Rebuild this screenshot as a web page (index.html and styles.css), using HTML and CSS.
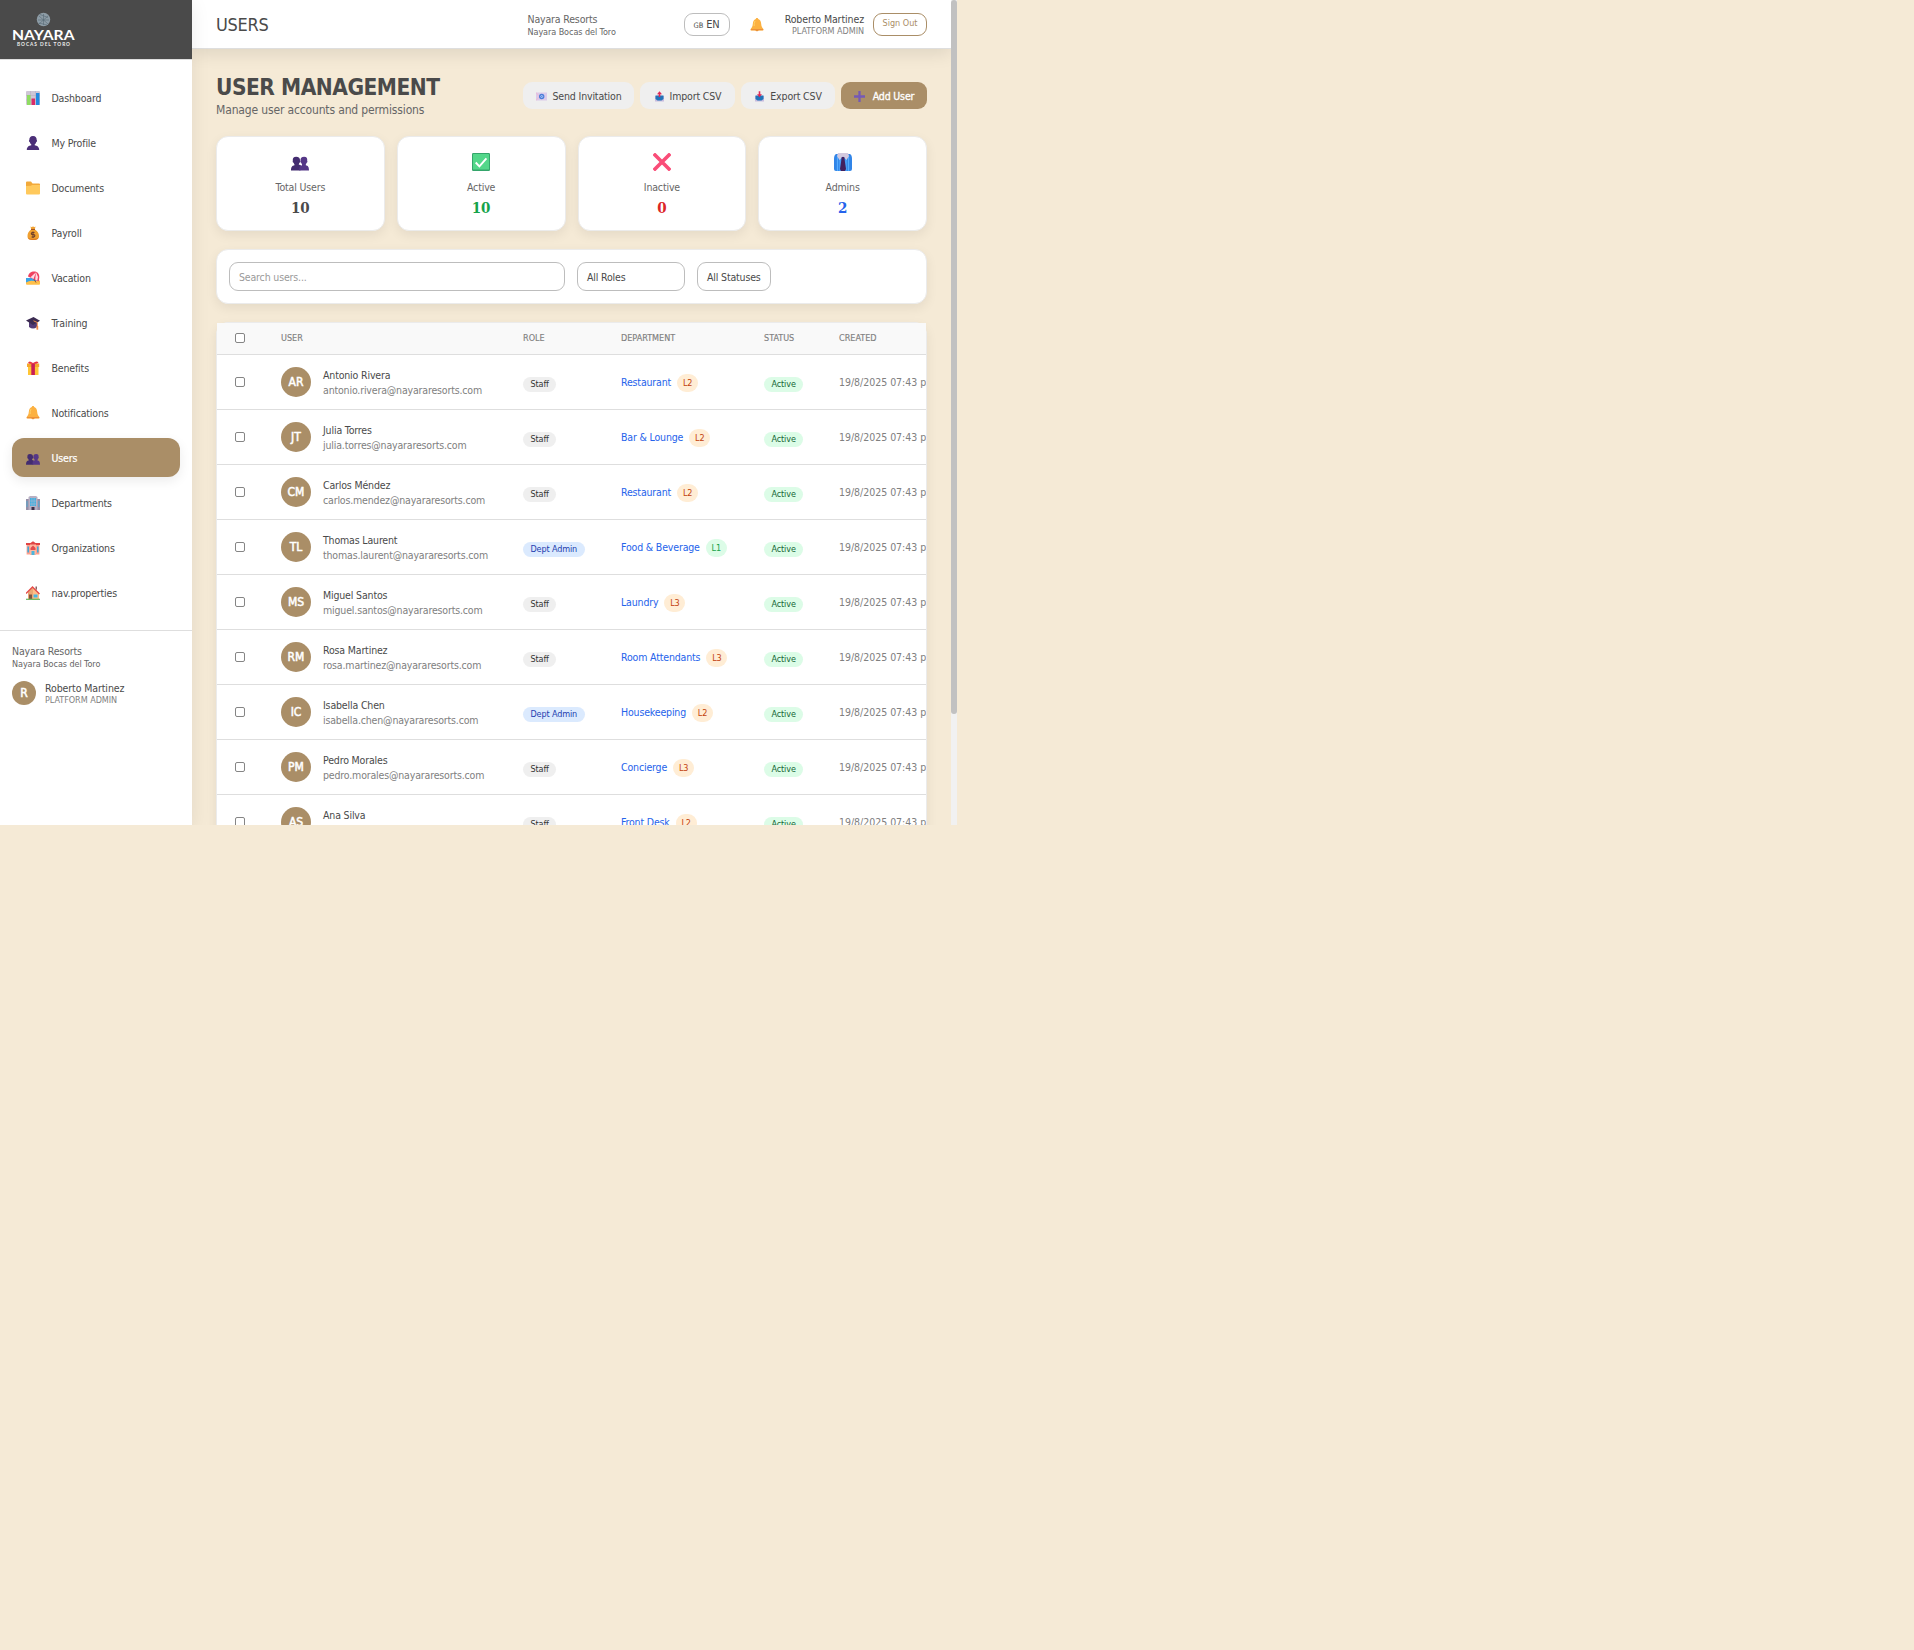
FILE: index.html
```html
<!DOCTYPE html>
<html lang="en">
<head>
<meta charset="utf-8">
<title>Users</title>
<link rel="stylesheet" href="styles.css">
</head>
<body>
<svg class="defs" aria-hidden="true">
  <symbol id="chart" viewBox="0 0 14 14"><rect width="14" height="14" rx="1" fill="#cfc6d6"/><path d="M0 4.500h14M0 9h14M4.500 0v14M9.500 0v14" stroke="#b5abc0" stroke-width=".5"/><rect x="1" y="4" width="3.500" height="10" fill="#8fdc62"/><rect x="5.500" y="7.500" width="3.500" height="6.500" fill="#d92b68"/><rect x="10" y="2" width="3.500" height="12" fill="#2389e0"/></symbol>
  <symbol id="person" viewBox="0 0 14 14"><path d="M7 0C4.300 0 3.200 1.800 3.300 4c-.6.200-.4 1.900.4 2.100.3 1.100.9 1.800 1.600 2.300v.8C3 9.800.8 10.500.8 14h12.400c0-3.500-2.200-4.200-4.500-4.800v-.8c.7-.5 1.300-1.200 1.600-2.300.8-.2 1-1.900.4-2.100C10.800 1.800 9.700 0 7 0z" fill="#4b2f78"/></symbol>
  <symbol id="folder" viewBox="0 0 14 14"><path d="M0 1.500q0-1 1-1h4l1.500 2H13q1 0 1 1v8H0z" fill="#f2a93a"/><path d="M0 5l5-.2 1-.8h8v8.500q0 1-1 1H1q-1 0-1-1z" fill="#ffc95c"/></symbol>
  <symbol id="money" viewBox="0 0 14 14"><path d="M4.500.5l1.500.7L7 .3l1.200.9 1.300-.7L8.800 3.500c2.600 1.300 4.200 4 4.200 6.500 0 3-2 4-6 4s-5.500-1-5.500-4c0-2.500 1.400-5.200 3.700-6.500z" fill="#f0a030"/><path d="M2 11.500c1 1.800 9 1.800 10.500 0C12 13.500 10 14 7 14s-4.500-.7-5-2.500z" fill="#d97a25"/><path d="M5 3.500h4" stroke="#a65622"/><path d="M8.500 6.500H6.300c-1.300 0-1.300 2 0 2h1.400c1.500 0 1.500 2.500 0 2.500H5.500M7 5.500V12" fill="none" stroke="#70402b" stroke-width="1.100"/></symbol>
  <symbol id="beach" viewBox="0 0 14 14"><path d="M0 7h13v5H0z" fill="#3aa4e8"/><path d="M0 11.500q4-2.500 8-1.500l6-.5V13q0 .7-1 .7H1Q0 13.700 0 13z" fill="#ffc04a"/><path d="M6 5l4 6.500" stroke="#81533e"/><path d="M2 5.500C2.500 1.500 7-.5 10.500 1 13.500 2.500 14 6 12.500 10.500z" fill="#ef4260"/><path d="M4.500 6.300L10 1.200 7.500 8zM10 1.200L12 6l-.8 3.800-2-1.200z" fill="#ffd9e3"/></symbol>
  <symbol id="cap" viewBox="0 0 14 14"><path d="M3 6v5q4 3 8 0V6z" fill="#533b76"/><path d="M0 4.500L7.500 1 14 4.700 7 9z" fill="#3c2b52"/><path d="M7.500 4.800l3.800 1.700v6" stroke="#ef8a45" fill="none" stroke-width="1"/><path d="M10.500 10h1.700v3.700h-1.700z" fill="#ef8a45"/></symbol>
  <symbol id="gift" viewBox="0 0 14 14"><path d="M2 5h10.500v9H2z" fill="#ffc635"/><path d="M1 2.500h12.200V6H1z" fill="#f5a82d"/><path d="M5.300 2.500h3.600V14H5.300z" fill="#c91e56"/><path d="M7 3Q3 3 2 2q1-3 5 0 4-3 5.500-.3Q11 3 7 3z" fill="#e83540"/></symbol>
  <symbol id="bell" viewBox="0 0 14 14"><path d="M5.300 12a1.800 1.800 0 0 0 3.400 0z" fill="#d9742c"/><path d="M7 0c-.8 0-1.200.5-1.200 1.100C3.800 1.600 3 3.500 2.800 6 2.600 8.800 1.700 9.500.7 11q-.5 1.500.8 1.500h11q1.300 0 .8-1.500c-1-1.500-1.900-2.200-2.100-5-.2-2.500-1-4.400-3-4.900C8.200.5 7.800 0 7 0z" fill="#fcb141"/><path d="M5 3q-1.200 3-.8 5" stroke="#ffd067" stroke-width="1" fill="none"/><path d="M.8 11h12.400v1.200H.8z" fill="#ed913a"/></symbol>
  <symbol id="people" viewBox="0 0 14 14"><path d="M4 3c-2 0-2.800 1.300-2.600 3-.3 1 .2 1.500.6 1.600l.7 1.300v.7C1 9.900 0 10.800 0 13.700h7.300L7.700 9.500 6 8.900l.6-1.300c.5-.2.800-1 .4-1.600.2-1.700-1-3-3-3z" fill="#432c70"/><path d="M10.200 3c-2 0-3 1.300-2.800 3-.3.800 0 1.500.5 1.600l.7 1.300v.7C7 9.900 6.500 10.800 6.500 13.700H14c0-2.900-.8-3.800-2.500-4.100v-.7l.7-1.300c.5-.2.800-1 .4-1.600.2-1.700-.4-3-2.400-3z" fill="#553787"/></symbol>
  <symbol id="office" viewBox="0 0 14 14"><path d="M0 3h3v11H0zM11 3h3v11h-3z" fill="#978fa7"/><path d="M2.500 1L4 0h6l1.500 1v13h-9z" fill="#b8b0c3"/><path d="M4 2h6v8H4z" fill="#40b1e2"/><path d="M5.900 2v9M8.100 2v9M3 5h8M3 8h8" stroke="#bcb6c6" stroke-width=".5"/><path d="M1 5v6M12.800 5v6" stroke="#54a9d0"/><path d="M5.500 11h3v3h-3z" fill="#3d3048"/></symbol>
  <symbol id="hotel" viewBox="0 0 14 14"><path d="M.6 4h12.800v9.500H.6z" fill="#ffa08c"/><path d="M0 2h4.500L7 .2 9.500 2H14v2H0z" fill="#e04545"/><path d="M4 3.500h6V14H4z" fill="#ffb8a0"/><path d="M2.200 5.500v6M11.800 5.500v6" stroke="#42a9d8" stroke-width="1.600"/><path d="M4.500 7L7 4.500 9.500 7v2h-5z" fill="#e14b4d"/><path d="M5.500 10h3v4h-3z" fill="#4ab6dd"/></symbol>
  <symbol id="house" viewBox="0 0 14 14"><path d="M2 6l4.500-5L12 7v6.500H2z" fill="#eba774"/><path d="M6.500 1L13 7v6H7V5z" fill="#ffbd87"/><path d="M9.500.5H11V4L9.500 3z" fill="#8b6564"/><path d="M0 7.500L6.500 1l7 7" fill="none" stroke="#e44b4a" stroke-width="1.400"/><path d="M3 8.500h3V13H3z" fill="#80533f"/><path d="M7.500 8.500h4v3h-4z" fill="#42b8e4"/><path d="M0 13.300h14" stroke="#66b65a" stroke-width="1.200"/></symbol>
  <symbol id="check" viewBox="0 0 18 18"><rect width="18" height="18" rx="1.200" fill="#34a56b"/><rect x="1" y="1" width="16" height="15.500" rx=".5" fill="#53d78a"/><path d="M3.700 9.500l3.700 3.800 7-8" stroke="#fff" stroke-width="1.900" fill="none"/></symbol>
  <symbol id="cross" viewBox="0 0 18 18"><path d="M2 2l14 14M16 2L2 16" stroke="#fa4d78" stroke-width="3.600" stroke-linecap="square"/></symbol>
  <symbol id="tie" viewBox="0 0 18 18"><path d="M2 1h14q2 1 2 5v10q0 2-2 2H2q-2 0-2-2V6Q0 2 2 1z" fill="#3185e8"/><path d="M3.500 3v15M6 5v13M12 5v13M14.500 3v15" stroke="#55adff" stroke-width="1.200"/><path d="M4 0h10l1 3-2.500 4L9 3.500 5.500 7 3 3z" fill="#d3c9df"/><path d="M7.700 4h2.600l.2 2 1.500 10-1 2H7l-1-2L7.500 6z" fill="#42205f"/></symbol>
  <symbol id="mail" viewBox="0 0 11 11"><rect y="1.500" width="11" height="8" fill="#dccbea"/><path d="M0 1.500L3 5.500 0 9.500" fill="none" stroke="#f2b6cf" stroke-width=".8"/><circle cx="5.700" cy="5.500" r="2.700" fill="#4a7dd8"/><circle cx="5.700" cy="5.500" r="1" fill="none" stroke="#cfe0ff" stroke-width=".7"/></symbol>
  <symbol id="tray-up" viewBox="0 0 11 11"><path d="M1 5h9v5.500H1z" fill="#c9bddf"/><path d="M1.500 4.500h8V8L7.500 9.500h-4L1.500 8z" fill="#2274b9"/><path d="M5.500.3L8 3.300H6.300V6H4.700V3.300H3z" fill="#df2856"/></symbol>
  <symbol id="tray-down" viewBox="0 0 11 11"><path d="M1 5h9v5.500H1z" fill="#c9bddf"/><path d="M1.500 4.500h8V8L7.500 9.500h-4L1.500 8z" fill="#2274b9"/><path d="M4.700.3h1.600v3H8L5.500 6.300 3 3.300h1.700z" fill="#df2856"/></symbol>
  <symbol id="plus" viewBox="0 0 11 11"><path d="M5.500 0v11M0 5.500h11" stroke="#7559b5" stroke-width="2.300"/></symbol>
</svg>

<div class="app">
  <aside class="sidebar">
    <div class="brand">
      <svg width="64" height="36" viewBox="0 0 64 36">
        <circle cx="31.500" cy="7.500" r="6.700" fill="#8d9ca6"/>
        <path d="M27 4l9 8M36 4l-9 8M26 8h11M31.500 2v11M28 2.500l8 3M27 11l8 2" stroke="#566873" stroke-width=".6"/>
        <text class="logo-name" x="0" y="27.500" textLength="62.500" lengthAdjust="spacingAndGlyphs">NAYARA</text>
        <text class="logo-place" x="5" y="34" textLength="53">BOCAS DEL TORO</text>
      </svg>
    </div>
    <nav class="nav">
      <a class="nav-item"><svg><use href="#chart"/></svg>Dashboard</a>
      <a class="nav-item"><svg><use href="#person"/></svg>My Profile</a>
      <a class="nav-item"><svg><use href="#folder"/></svg>Documents</a>
      <a class="nav-item"><svg><use href="#money"/></svg>Payroll</a>
      <a class="nav-item"><svg><use href="#beach"/></svg>Vacation</a>
      <a class="nav-item"><svg><use href="#cap"/></svg>Training</a>
      <a class="nav-item"><svg><use href="#gift"/></svg>Benefits</a>
      <a class="nav-item"><svg><use href="#bell"/></svg>Notifications</a>
      <a class="nav-item active"><svg><use href="#people"/></svg>Users</a>
      <a class="nav-item"><svg><use href="#office"/></svg>Departments</a>
      <a class="nav-item"><svg><use href="#hotel"/></svg>Organizations</a>
      <a class="nav-item"><svg><use href="#house"/></svg>nav.properties</a>
    </nav>
    <div class="account">
      <div class="org">Nayara Resorts</div>
      <div class="property">Nayara Bocas del Toro</div>
      <div class="me">
        <span class="me-avatar">R</span>
        <div><div class="me-name">Roberto Martinez</div><div class="me-role">PLATFORM ADMIN</div></div>
      </div>
    </div>
  </aside>

  <div class="content">
    <header class="topbar">
      <div class="page-name">USERS</div>
      <div class="top-org"><div class="org">Nayara Resorts</div><div class="property">Nayara Bocas del Toro</div></div>
      <div class="top-actions">
        <button class="lang"><small>GB</small> EN</button>
        <svg class="top-bell"><use href="#bell"/></svg>
        <div class="top-user"><div class="me-name">Roberto Martinez</div><div class="me-role">PLATFORM ADMIN</div></div>
        <button class="signout">Sign Out</button>
      </div>
    </header>

    <main class="main">
      <div class="heading">
        <div><h1>USER MANAGEMENT</h1><p>Manage user accounts and permissions</p></div>
        <div class="buttons">
          <button class="btn send"><svg><use href="#mail"/></svg>Send Invitation</button>
          <button class="btn import"><svg><use href="#tray-up"/></svg>Import CSV</button>
          <button class="btn export"><svg><use href="#tray-down"/></svg>Export CSV</button>
          <button class="btn primary"><svg><use href="#plus"/></svg>Add User</button>
        </div>
      </div>

      <div class="stats">
        <div class="card stat"><svg><use href="#people"/></svg><span>Total Users</span><b>10</b></div>
        <div class="card stat"><svg><use href="#check"/></svg><span>Active</span><b class="green">10</b></div>
        <div class="card stat"><svg><use href="#cross"/></svg><span>Inactive</span><b class="red">0</b></div>
        <div class="card stat"><svg><use href="#tie"/></svg><span>Admins</span><b class="blue">2</b></div>
      </div>

      <div class="card filters">
        <input class="field search" placeholder="Search users...">
        <div class="field roles">All Roles</div>
        <div class="field statuses">All Statuses</div>
      </div>

      <div class="card table-card"><div class="table-clip">
        <table>
          <colgroup><col class="c-check"><col class="c-user"><col class="c-role"><col class="c-dept"><col class="c-status"><col class="c-created"></colgroup>
          <thead><tr><th><i class="box"></i></th><th>USER</th><th>ROLE</th><th>DEPARTMENT</th><th>STATUS</th><th>CREATED</th></tr></thead>
          <tbody>
            <tr><td><i class="box"></i></td><td><div class="user"><span class="avatar">AR</span><div class="who"><div class="name">Antonio Rivera</div><div class="email">antonio.rivera@nayararesorts.com</div></div></div></td><td><span class="pill">Staff</span></td><td><div class="dept">Restaurant<span class="level">L2</span></div></td><td><span class="pill on">Active</span></td><td class="date">19/8/2025 07:43 p. m.</td></tr>
            <tr><td><i class="box"></i></td><td><div class="user"><span class="avatar">JT</span><div class="who"><div class="name">Julia Torres</div><div class="email">julia.torres@nayararesorts.com</div></div></div></td><td><span class="pill">Staff</span></td><td><div class="dept">Bar &amp; Lounge<span class="level">L2</span></div></td><td><span class="pill on">Active</span></td><td class="date">19/8/2025 07:43 p. m.</td></tr>
            <tr><td><i class="box"></i></td><td><div class="user"><span class="avatar">CM</span><div class="who"><div class="name">Carlos Méndez</div><div class="email">carlos.mendez@nayararesorts.com</div></div></div></td><td><span class="pill">Staff</span></td><td><div class="dept">Restaurant<span class="level">L2</span></div></td><td><span class="pill on">Active</span></td><td class="date">19/8/2025 07:43 p. m.</td></tr>
            <tr><td><i class="box"></i></td><td><div class="user"><span class="avatar">TL</span><div class="who"><div class="name">Thomas Laurent</div><div class="email">thomas.laurent@nayararesorts.com</div></div></div></td><td><span class="pill admin">Dept Admin</span></td><td><div class="dept">Food &amp; Beverage<span class="level one">L1</span></div></td><td><span class="pill on">Active</span></td><td class="date">19/8/2025 07:43 p. m.</td></tr>
            <tr><td><i class="box"></i></td><td><div class="user"><span class="avatar">MS</span><div class="who"><div class="name">Miguel Santos</div><div class="email">miguel.santos@nayararesorts.com</div></div></div></td><td><span class="pill">Staff</span></td><td><div class="dept">Laundry<span class="level">L3</span></div></td><td><span class="pill on">Active</span></td><td class="date">19/8/2025 07:43 p. m.</td></tr>
            <tr><td><i class="box"></i></td><td><div class="user"><span class="avatar">RM</span><div class="who"><div class="name">Rosa Martinez</div><div class="email">rosa.martinez@nayararesorts.com</div></div></div></td><td><span class="pill">Staff</span></td><td><div class="dept">Room Attendants<span class="level">L3</span></div></td><td><span class="pill on">Active</span></td><td class="date">19/8/2025 07:43 p. m.</td></tr>
            <tr><td><i class="box"></i></td><td><div class="user"><span class="avatar">IC</span><div class="who"><div class="name">Isabella Chen</div><div class="email">isabella.chen@nayararesorts.com</div></div></div></td><td><span class="pill admin">Dept Admin</span></td><td><div class="dept">Housekeeping<span class="level">L2</span></div></td><td><span class="pill on">Active</span></td><td class="date">19/8/2025 07:43 p. m.</td></tr>
            <tr><td><i class="box"></i></td><td><div class="user"><span class="avatar">PM</span><div class="who"><div class="name">Pedro Morales</div><div class="email">pedro.morales@nayararesorts.com</div></div></div></td><td><span class="pill">Staff</span></td><td><div class="dept">Concierge<span class="level">L3</span></div></td><td><span class="pill on">Active</span></td><td class="date">19/8/2025 07:43 p. m.</td></tr>
            <tr><td><i class="box"></i></td><td><div class="user"><span class="avatar">AS</span><div class="who"><div class="name">Ana Silva</div><div class="email">ana.silva@nayararesorts.com</div></div></div></td><td><span class="pill">Staff</span></td><td><div class="dept">Front Desk<span class="level">L2</span></div></td><td><span class="pill on">Active</span></td><td class="date">19/8/2025 07:43 p. m.</td></tr>
          </tbody>
        </table>
      </div></div>
    </main>
  </div>
  <div class="scrollbar"><div class="thumb"></div></div>
</div>
</body>
</html>
```
FILE: styles.css
```css
* { box-sizing: border-box; }
body {
  margin: 0;
  background: #f5ead6;
  color: #4a4a4a;
  font-family: "DejaVu Sans Condensed", "DejaVu Sans", sans-serif;
  font-stretch: condensed;
  font-size: 10.5px;
  line-height: 15px;
  letter-spacing: -0.16px;
}
button, input { font: inherit; letter-spacing: inherit; color: inherit; }
button { padding: 0; white-space: nowrap; }
.defs { position: absolute; width: 0; height: 0; }
.app { display: flex; width: 957px; height: 825px; overflow: hidden; }

/* Sidebar */
.sidebar { width: 192px; flex: none; background: #fff; box-shadow: 0 4px 18px rgba(0, 0, 0, .08); z-index: 1; }
.brand { height: 60px; padding: 12px; background: #4a4a4a; border-bottom: 1px solid #dedede; }
.brand svg { display: block; }
.logo-name { font: bold 14px Lato, sans-serif; fill: #fff; letter-spacing: 0; }
.logo-place { font: bold 4.800px Lato, sans-serif; fill: #eee; letter-spacing: 0; }
.nav { display: flex; flex-direction: column; gap: 6px; padding: 18px 12px; }
.nav-item { display: flex; align-items: center; gap: 11.500px; height: 39px; padding: 2px 0 0 14px; border-radius: 12px; }
.nav-item svg { width: 14px; height: 14px; margin-top: -2px; }
.nav-item.active { background: #aa8e67; color: #fff; box-shadow: 0 4px 12px rgba(0, 0, 0, .08); -webkit-text-stroke: .2px #fff; }
.account { border-top: 1px solid #dedede; padding: 13px 12px; }
.org { line-height: 15px; }
.property { font-size: 9px; line-height: 11px; letter-spacing: -.07px; }
.account, .top-org { color: #666; }
.me { display: flex; align-items: center; gap: 9px; margin-top: 10px; }
.me-avatar { display: grid; place-items: center; width: 24px; height: 24px; padding-top: 1px; border-radius: 50%; background: #aa8e67; color: #fff; font-size: 12px; -webkit-text-stroke: .5px #fff; }
.me-name { line-height: 14px; color: #4a4a4a; letter-spacing: -.1px; }
.me-role { font-size: 9px; line-height: 11px; color: #808080; letter-spacing: -.05px; }
.me .me-name { padding-top: 1px; }

/* Top bar */
.content { width: 759px; flex: none; }
.topbar { display: flex; align-items: center; height: 49px; padding: 0 24px; background: #fff; border-bottom: 1px solid #dedede; box-shadow: 0 4px 18px rgba(0, 0, 0, .1); }
.page-name { width: 311.500px; padding-top: 1px; font-size: 18px; line-height: 24px; letter-spacing: -.3px; }
.top-org { flex: 1; padding-top: 2px; }
.top-actions { display: flex; align-items: center; }
.lang { width: 46px; height: 23px; padding-top: 1px; background: #fff; border: 1px solid #bdbdbd; border-radius: 9px; font-size: 11px; }
.lang small { font-size: 7.500px; letter-spacing: 0; }
.top-bell { width: 14px; height: 14px; margin: 1px 0 0 20.500px; }
.top-user { width: 100px; text-align: right; padding-top: 1px; }
.signout { width: 54px; height: 23px; margin-left: 9px; padding-bottom: 1px; background: #fff; border: 1px solid #aa8e67; border-radius: 9px; color: #aa8e67; font-size: 9px; letter-spacing: 0; }

/* Page heading */
.main { padding: 24px; display: flex; flex-direction: column; }
.heading { display: flex; justify-content: space-between; align-items: center; height: 45px; margin-bottom: 18px; }
h1 { margin: 0; padding-top: 1px; font-size: 22.500px; line-height: 28px; letter-spacing: -.5px; white-space: nowrap; }
p { margin: 0; font-size: 12px; line-height: 18px; color: #666; letter-spacing: -.15px; white-space: nowrap; }
.buttons { display: flex; gap: 6px; }
.btn { display: flex; align-items: center; justify-content: center; gap: 6px; height: 27px; padding-top: 2px; border: 0; border-radius: 9px; background: #efefef; }
.btn svg { width: 11px; height: 11px; margin-top: -1px; }
.send { width: 111px; }
.import { width: 95px; gap: 5px; }
.export { width: 94px; gap: 5px; }
.primary { width: 86px; gap: 8px; background: #aa8e67; color: #fff; -webkit-text-stroke: .3px #fff; }

/* Cards */
.card { background: #fff; border: 1px solid #ebebeb; border-radius: 12px; box-shadow: 0 4px 12px rgba(0, 0, 0, .07); }
.stats { display: grid; grid-template-columns: repeat(4, 1fr); gap: 12px; height: 95px; margin-bottom: 18px; }
.stat { display: flex; flex-direction: column; align-items: center; padding-top: 16px; color: #666; }
.stat svg { width: 18px; height: 18px; margin-bottom: 9px; }
.stat b { margin-top: 3px; font: bold 15px/21px "DejaVu Serif Condensed", "DejaVu Serif", serif; color: #4a4a4a; letter-spacing: 0; }
.stat .green { color: #16a34a; }
.stat .red { color: #dc2626; }
.stat .blue { color: #2563eb; }
.filters { display: flex; gap: 12px; height: 55px; padding: 12px; margin-bottom: 18px; }
.field { height: 29px; padding: 0 9px; border: 1px solid #bdbdbd; border-radius: 9px; background: #fff; line-height: 28px; white-space: nowrap; }
.search { width: 336px; }
.search::placeholder { color: #9a9a9a; opacity: 1; }
.roles { width: 108px; }
.statuses { width: 74px; }

/* User table */
.table-clip { overflow: hidden; }
table { width: 780px; table-layout: fixed; border-collapse: separate; border-spacing: 0; }
.c-check { width: 46px; }
.c-user { width: 242px; }
.c-role { width: 98px; }
.c-dept { width: 143px; }
.c-status { width: 75px; }
.c-created { width: 176px; }
th, td { padding: 0 0 0 18px; text-align: left; border-bottom: 1px solid #dedede; white-space: nowrap; }
th { height: 32px; background: #f9f9f9; color: #808080; font-size: 9px; font-weight: 400; letter-spacing: 0; -webkit-text-stroke: .15px #808080; }
td { height: 55px; }
.box { display: block; width: 10px; height: 10px; border: 1px solid #858585; border-radius: 2px; background: #fff; }
th .box { margin-bottom: 2px; }
.user { display: flex; align-items: center; gap: 12px; }
.who { padding-top: 2px; }
.avatar { display: grid; place-items: center; width: 30px; height: 30px; padding-top: 1px; border-radius: 50%; background: #aa8e67; color: #fff; font-size: 12px; letter-spacing: 0; -webkit-text-stroke: .5px #fff; }
.email { color: #808080; }
.date { color: #808080; letter-spacing: -.03px; }
.pill { display: inline-block; height: 15px; margin-top: 5px; padding: 0 7.500px; border-radius: 8px; background: #efefef; color: #333; font-size: 9px; line-height: 15px; letter-spacing: -.13px; }
.pill.admin { background: #dbeafe; color: #1e40af; }
.pill.on { background: #dcfce7; color: #166534; }
.dept { display: flex; align-items: center; gap: 6px; padding-top: 1px; color: #2563eb; }
.level { width: 21px; height: 18px; border-radius: 9px; background: #ffedd5; color: #c2410c; font-size: 9px; line-height: 18px; text-align: center; }
.level.one { background: #dcfce7; color: #16a34a; }

/* Page scrollbar */
.scrollbar { width: 6px; flex: none; background: #f1f1f1; }
.thumb { height: 714px; background: #c1c1c1; border-radius: 3px; }
```
